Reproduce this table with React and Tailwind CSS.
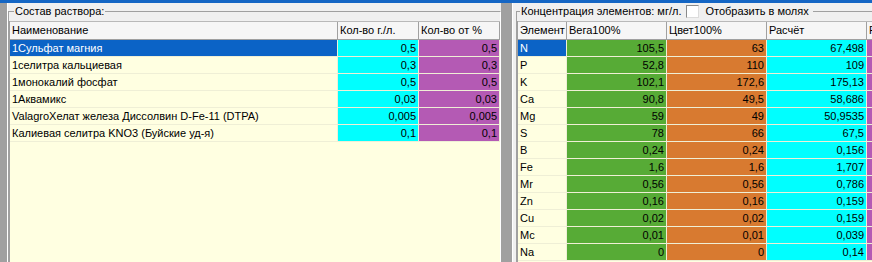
import React from 'react';

// Состав раствора
const solution = [
  { name: '1Сульфат магния', gl: '0,5', pct: '0,5', selected: true },
  { name: '1селитра кальциевая', gl: '0,3', pct: '0,3' },
  { name: '1монокалий фосфат', gl: '0,5', pct: '0,5' },
  { name: '1Аквамикс', gl: '0,03', pct: '0,03' },
  { name: 'ValagroХелат железа Диссолвин D-Fe-11 (DTPA)', gl: '0,005', pct: '0,005' },
  { name: 'Калиевая селитра KNO3 (Буйские уд-я)', gl: '0,1', pct: '0,1' },
];

// Концентрация элементов
const elements = [
  ['N', '105,5', '63', '67,498'],
  ['P', '52,8', '110', '109'],
  ['K', '102,1', '172,6', '175,13'],
  ['Ca', '90,8', '49,5', '58,686'],
  ['Mg', '59', '49', '50,9535'],
  ['S', '78', '66', '67,5'],
  ['B', '0,24', '0,24', '0,156'],
  ['Fe', '1,6', '1,6', '1,707'],
  ['Mr', '0,56', '0,56', '0,786'],
  ['Zn', '0,16', '0,16', '0,159'],
  ['Cu', '0,02', '0,02', '0,159'],
  ['Mc', '0,01', '0,01', '0,039'],
  ['Na', '0', '0', '0,14'],
];

const HeadCell = ({ className = '', children }) => (
  <div
    className={`shrink-0 h-[17px] leading-[17px] pl-[2px] border-r border-[#a0a0a0] bg-[#f6f6f6] whitespace-nowrap overflow-hidden ${className}`}
  >
    {children}
  </div>
);

const Cell = ({ className = '', right, children }) => (
  <div
    className={`shrink-0 h-[17px] leading-[16px] border-r border-b border-[#efefd6] whitespace-nowrap overflow-hidden ${
      right ? 'text-right pr-[2px]' : 'pl-[2px]'
    } ${className}`}
  >
    {children}
  </div>
);

const App = () => {
  return (
    <div className="w-[872px] h-[262px] overflow-hidden bg-[#f0f0f0] text-black font-['Liberation_Sans',Arial,sans-serif] text-[11px]">
      {/* window edge */}
      <div className="h-[3px] bg-[#1566c4]" />

      <div className="flex h-[259px]">
        {/* left edge */}
        <div className="w-[8px] shrink-0 bg-[#a0a0a0] border-r border-white" />

        {/* Состав раствора */}
        <fieldset className="mt-px w-[493px] shrink-0 border-t border-l border-[#a0a0a0] border-r border-r-white">
          <legend className="ml-[5px] px-px leading-[14px]">Состав раствора:</legend>
          <div className="pt-[3px]">
            <div className="h-[241px] w-[491px] bg-[#ffffe1] border-l border-[#a0a0a0]">
              <div className="flex border-t border-b border-t-[#b9b9b9] border-b-[#a0a0a0]">
                <HeadCell className="w-[328px]">Наименование</HeadCell>
                <HeadCell className="w-[81px]">Кол-во г./л.</HeadCell>
                <HeadCell className="w-[81px]">Кол-во от %</HeadCell>
              </div>
              {solution.map((row) => (
                <div key={row.name} className="flex">
                  <Cell className={`w-[328px] ${row.selected ? 'bg-[#0b63c6] text-white' : ''}`}>
                    {row.name}
                  </Cell>
                  <Cell right className="w-[81px] bg-[#00ffff]">
                    {row.gl}
                  </Cell>
                  <Cell right className="w-[81px] bg-[#b45ab4]">
                    {row.pct}
                  </Cell>
                </div>
              ))}
            </div>
          </div>
        </fieldset>

        {/* splitter */}
        <div className="w-[12px] shrink-0 bg-[#a0a0a0] border-r border-white" />

        {/* Концентрация элементов */}
        <div className="flex-1 min-w-0 overflow-hidden">
          <fieldset className="mt-px ml-[3px] border-t border-l border-[#a0a0a0]">
            <legend className="ml-[3px] px-px leading-[14px]">
              <span className="inline-flex items-center whitespace-nowrap">
                Концентрация элементов: мг/л.
                <span className="ml-[5px] w-[13px] h-[13px] bg-white border border-[#8a8a8a] border-r-[#dcdcdc] border-b-[#dcdcdc]" />
                <span className="ml-[6px] pr-[3px]">Отобразить в молях</span>
              </span>
            </legend>
            <div className="pt-[3px]">
              <div className="h-[241px] w-[460px] bg-[#ffffe1] border-l border-[#a0a0a0]">
                <div className="flex border-t border-b border-t-[#b9b9b9] border-b-[#a0a0a0]">
                  <HeadCell className="w-[49px]">Элемент</HeadCell>
                  <HeadCell className="w-[100px]">Вега100%</HeadCell>
                  <HeadCell className="w-[100px]">Цвет100%</HeadCell>
                  <HeadCell className="w-[100px]">Расчёт</HeadCell>
                  <HeadCell className="w-[100px]">Расчёт %</HeadCell>
                </div>
                {elements.map(([el, vega, cvet, calc], i) => (
                  <div key={el} className="flex">
                    <Cell className={`w-[49px] ${i === 0 ? 'bg-[#0b63c6] text-white' : ''}`}>{el}</Cell>
                    <Cell right className="w-[100px] bg-[#57ab36]">
                      {vega}
                    </Cell>
                    <Cell right className="w-[100px] bg-[#d87a30]">
                      {cvet}
                    </Cell>
                    <Cell right className="w-[100px] bg-[#00ffff]">
                      {calc}
                    </Cell>
                    <Cell right className="w-[100px] bg-[#b45ab4]" />
                  </div>
                ))}
              </div>
            </div>
          </fieldset>
        </div>
      </div>
    </div>
  );
};

export default App;
